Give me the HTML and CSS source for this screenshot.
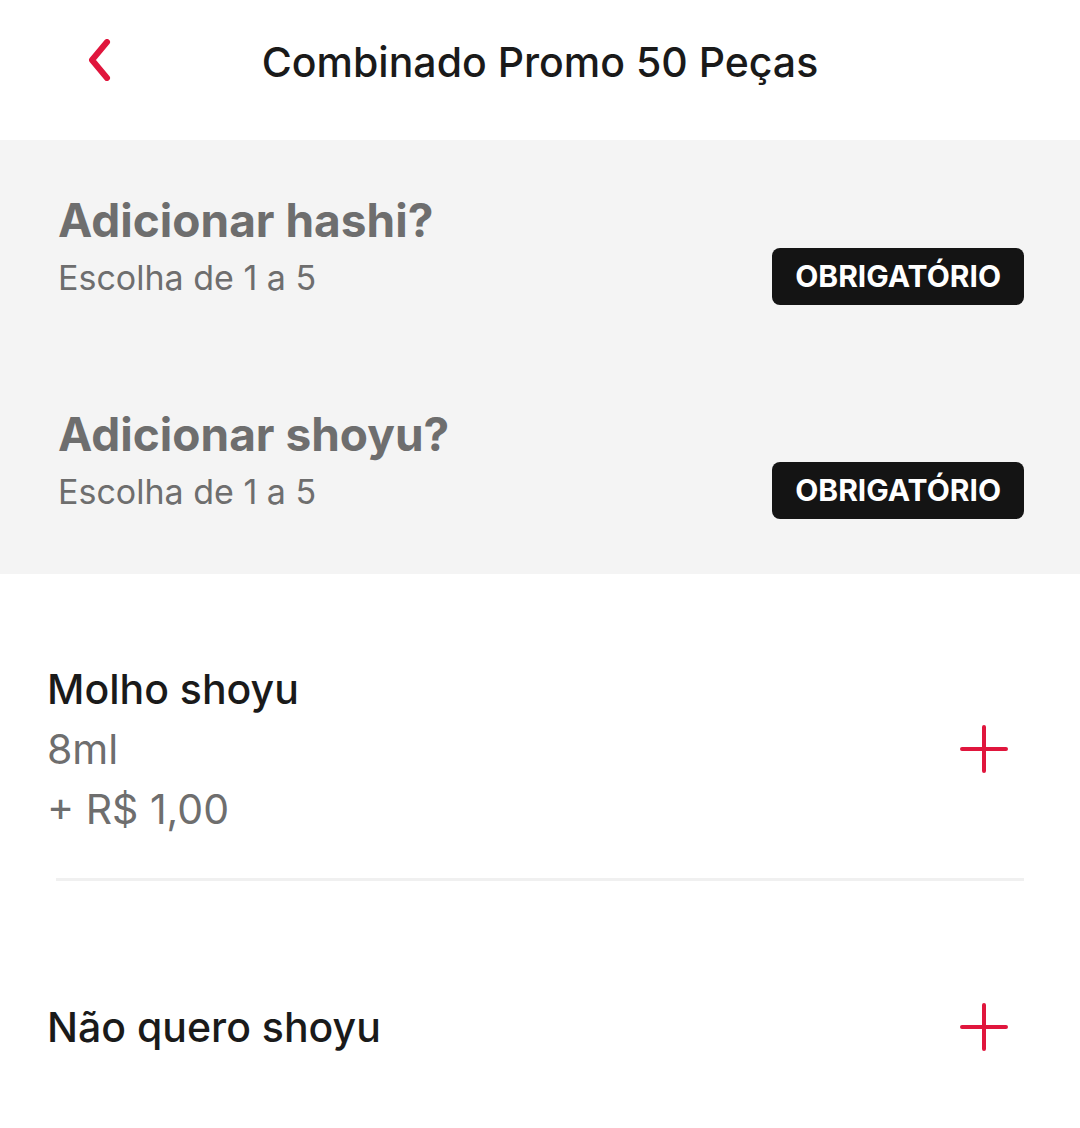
FILE: index.html
```html
<!DOCTYPE html>
<html lang="pt-BR">

<head>
    <meta charset="UTF-8">
    <meta name="viewport" content="width=device-width, initial-scale=1.0">
    <title>Combinado Promo 50 Peças</title>
    <link rel="stylesheet" href="styles.css">
</head>

<body>
    <header class="topbar">
        <button class="back" aria-label="Voltar">
            <svg width="26" height="42" viewBox="0 0 26 42">
                <path d="M21 3 L6 21 L21 39" fill="none" stroke="#e0163d" stroke-width="6" stroke-linecap="round" stroke-linejoin="round"/>
            </svg>
        </button>
        <h1 class="title">Combinado Promo 50 Peças</h1>
        <span></span>
    </header>

    <section class="groups">
        <div class="group">
            <div class="group-text">
                <h2>Adicionar hashi?</h2>
                <p>Escolha de 1 a 5</p>
            </div>
            <span class="badge">OBRIGATÓRIO</span>
        </div>
        <div class="group">
            <div class="group-text">
                <h2>Adicionar shoyu?</h2>
                <p>Escolha de 1 a 5</p>
            </div>
            <span class="badge">OBRIGATÓRIO</span>
        </div>
    </section>

    <ul class="options">
        <li class="option">
            <div class="option-text">
                <div class="option-name">Molho shoyu</div>
                <div class="option-desc">8ml</div>
                <div class="option-price">+ R$ 1,00</div>
            </div>
            <button class="add" aria-label="Adicionar">
                <svg width="48" height="48" viewBox="0 0 48 48">
                    <path d="M24 2 V46 M2 24 H46" stroke="#e0163d" stroke-width="4" stroke-linecap="round"/>
                </svg>
            </button>
        </li>
        <li class="divider"></li>
        <li class="option single">
            <div class="option-text">
                <div class="option-name">Não quero shoyu</div>
            </div>
            <button class="add" aria-label="Adicionar">
                <svg width="48" height="48" viewBox="0 0 48 48">
                    <path d="M24 2 V46 M2 24 H46" stroke="#e0163d" stroke-width="4" stroke-linecap="round"/>
                </svg>
            </button>
        </li>
    </ul>
</body>

</html>
```

FILE: styles.css
```css
body {
    margin: 0;
    font-family: Inter, "Noto Sans", sans-serif;
    background-color: white;
    color: #1a1a1a;
}

.topbar {
    height: 140px;
    display: grid;
    grid-template-columns: 1fr auto 1fr;
    align-items: center;
}

.back {
    justify-self: start;
    margin-left: 86px;
    margin-top: -20px;
    padding: 0;
    border: none;
    background: none;
    display: flex;
}

.title {
    margin: 0 0 16px;
    font-size: 41px;
    font-weight: 500;
    color: #1a1a1a;
}

.groups {
    background-color: #f4f4f4;
    padding: 40px 56px 50px 58px;
}

.group {
    display: flex;
    align-items: center;
    justify-content: space-between;
    height: 130px;
}

.group + .group {
    margin-top: 84px;
}

.group h2 {
    margin: 0;
    font-size: 46px;
    font-weight: 700;
    color: #6e6e6e;
    line-height: 60px;
}

.group p {
    margin: 6px 0 0;
    font-size: 34px;
    color: #6e6e6e;
    line-height: 44px;
}

.badge {
    margin-top: 62px;
    background-color: #141414;
    color: white;
    font-size: 30px;
    font-weight: 700;
    line-height: 33px;
    padding: 12px 23px;
    border-radius: 8px;
}

.options {
    list-style: none;
    margin: 0;
    padding: 0 56px 0 47px;
}

.option {
    display: flex;
    align-items: center;
    justify-content: space-between;
    padding: 85px 0 39px;
}

.divider {
    height: 3px;
    margin-left: 9px;
    background-color: #f0f0f0;
}

.option.single {
    padding-top: 116px;
}

.option-name {
    font-size: 41px;
    font-weight: 500;
    line-height: 60px;
    color: #1a1a1a;
}

.option-desc,
.option-price {
    font-size: 41px;
    line-height: 60px;
    color: #6e6e6e;
}

.add {
    padding: 0;
    border: none;
    background: none;
    display: flex;
    margin-right: 16px;
}
```
